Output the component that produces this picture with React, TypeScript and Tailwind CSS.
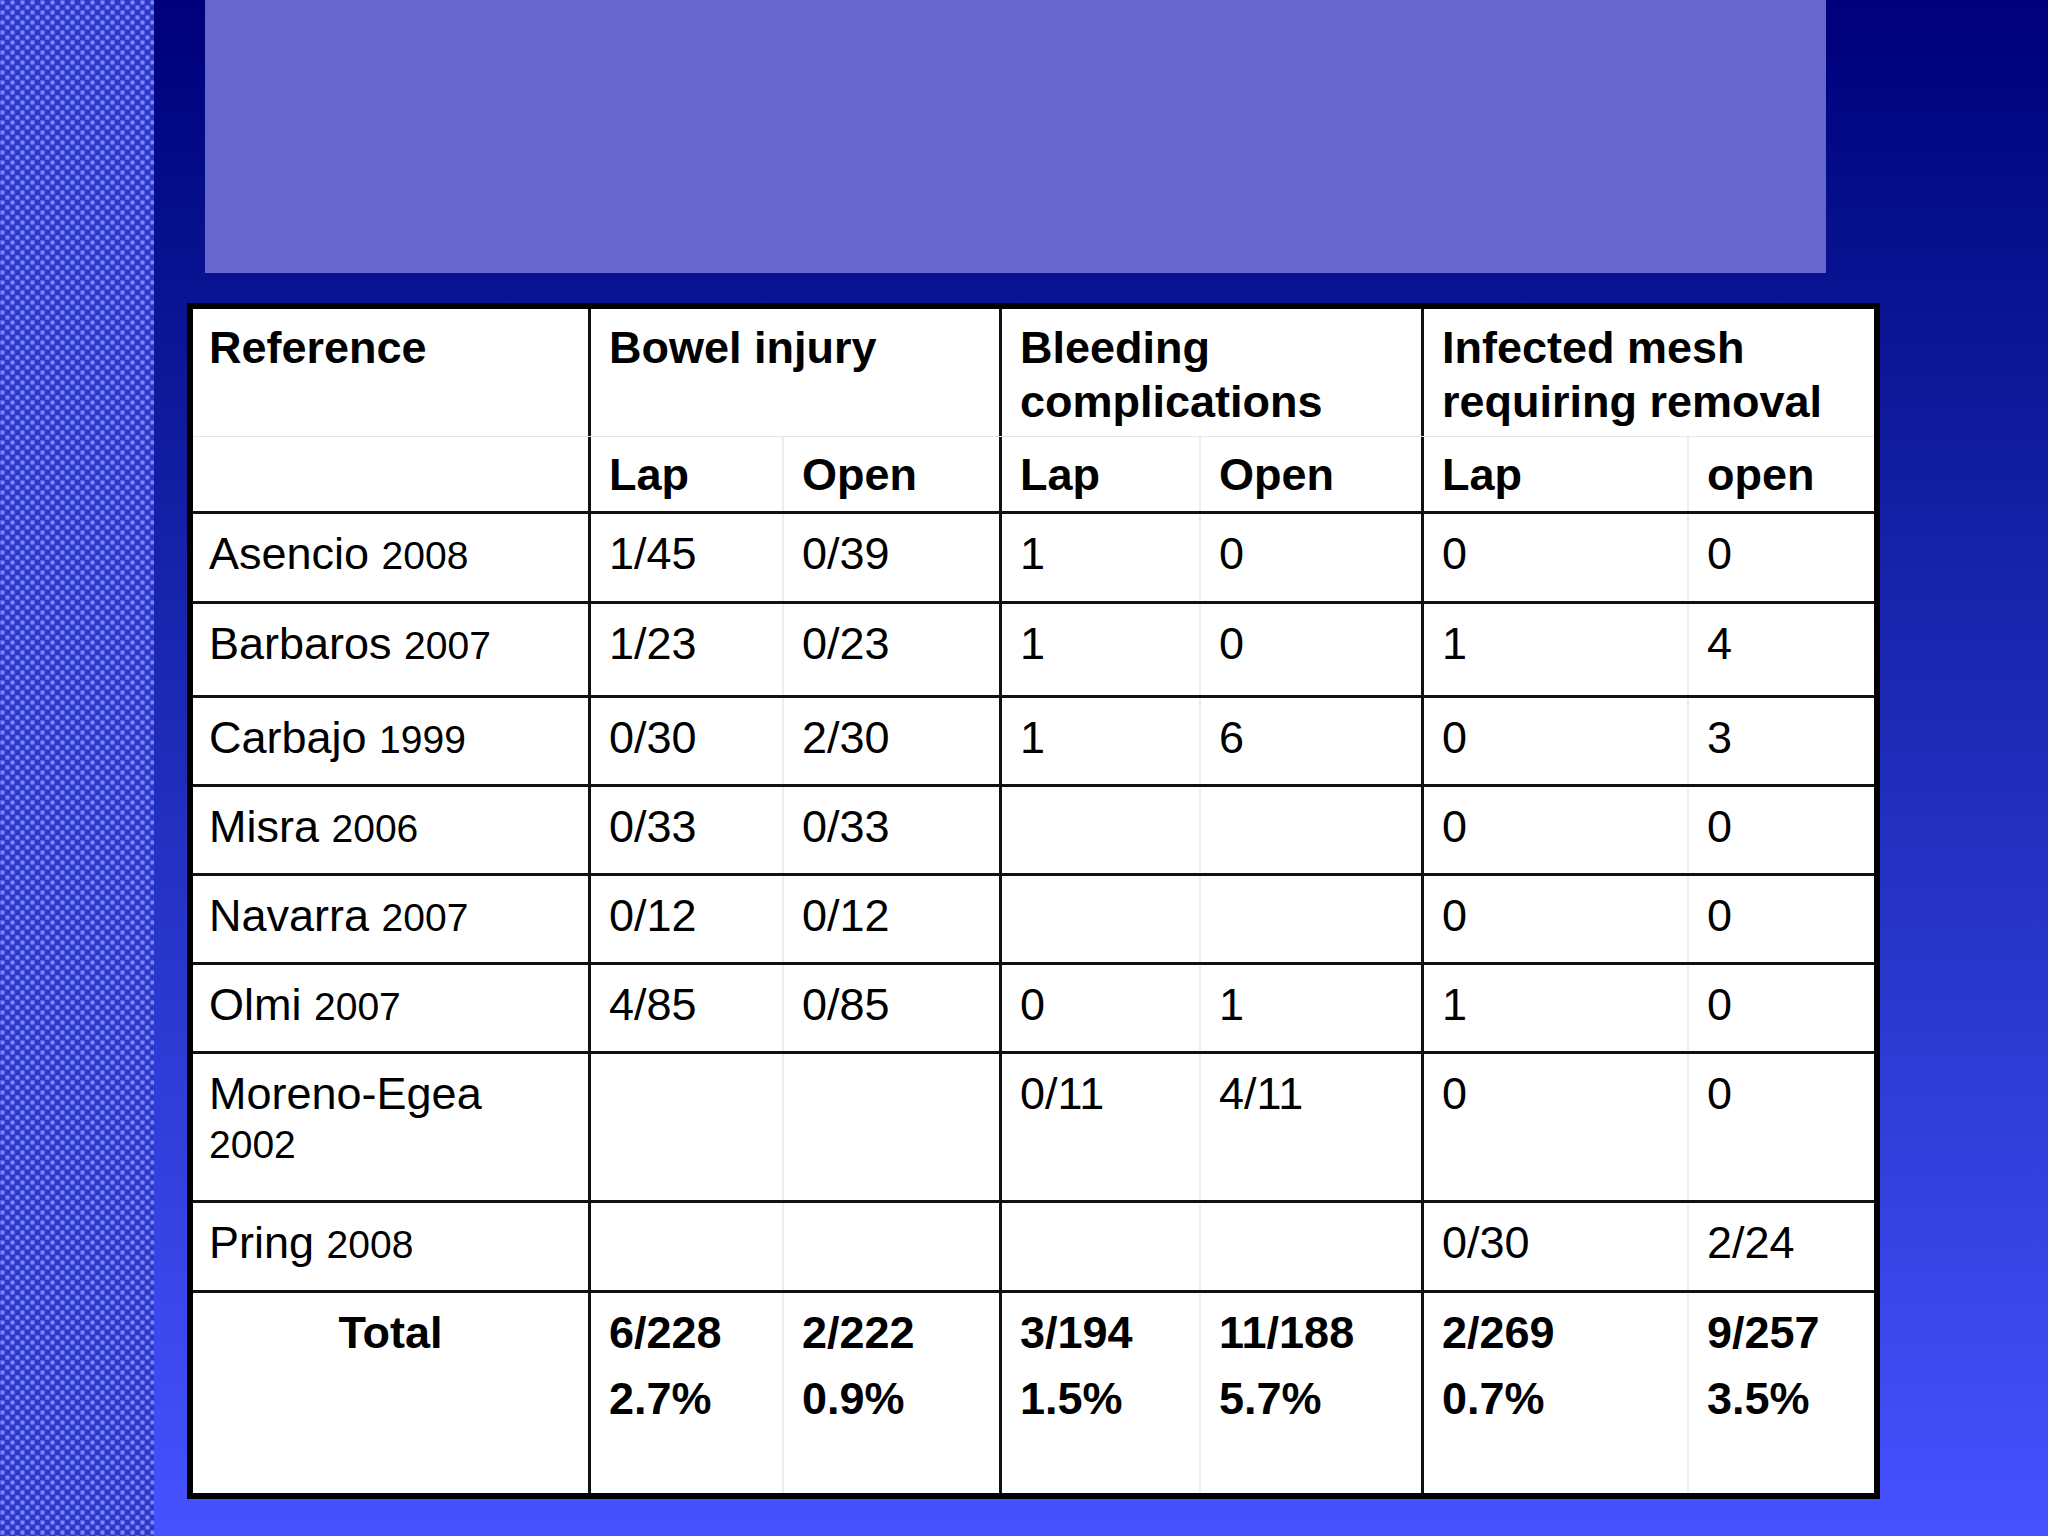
const font = { fontFamily: '"Liberation Sans", Arial, sans-serif' };

type Cell = string | { name: string; year: string; br?: boolean };

const rows: { h: string; cells: Cell[] }[] = [
  { h: "h-[90px]", cells: [{ name: "Asencio", year: "2008" }, "1/45", "0/39", "1", "0", "0", "0"] },
  { h: "h-[94px]", cells: [{ name: "Barbaros", year: "2007" }, "1/23", "0/23", "1", "0", "1", "4"] },
  { h: "h-[89px]", cells: [{ name: "Carbajo", year: "1999" }, "0/30", "2/30", "1", "6", "0", "3"] },
  { h: "h-[89px]", cells: [{ name: "Misra", year: "2006" }, "0/33", "0/33", "", "", "0", "0"] },
  { h: "h-[89px]", cells: [{ name: "Navarra", year: "2007" }, "0/12", "0/12", "", "", "0", "0"] },
  { h: "h-[89px]", cells: [{ name: "Olmi", year: "2007" }, "4/85", "0/85", "0", "1", "1", "0"] },
  { h: "h-[149px]", cells: [{ name: "Moreno-Egea", year: "2002", br: true }, "", "", "0/11", "4/11", "0", "0"] },
  { h: "h-[90px]", cells: [{ name: "Pring", year: "2008" }, "", "", "", "", "0/30", "2/24"] },
];

const totals = [
  ["6/228", "2.7%"],
  ["2/222", "0.9%"],
  ["3/194", "1.5%"],
  ["11/188", "5.7%"],
  ["2/269", "0.7%"],
  ["9/257", "3.5%"],
];

// widths of the 7 columns and the line on their right
const colW = ["w-[398px]", "w-[193px]", "w-[218px]", "w-[199px]", "w-[223px]", "w-[265px]", "w-[185px]"];
const colR = [
  "border-r-[3px] border-r-[#111]",
  "border-r-[2px] border-r-[#ececf2]",
  "border-r-[3px] border-r-[#111]",
  "border-r-[2px] border-r-[#ececf2]",
  "border-r-[3px] border-r-[#111]",
  "border-r-[2px] border-r-[#ececf2]",
  "",
];

function DotStrip() {
  return (
    <div className="w-[154px] h-full shrink-0">
      <svg className="w-full h-full block">
        <defs>
          <pattern id="dots" width="10" height="10" patternUnits="userSpaceOnUse">
            <rect width="10" height="10" fill="#3434c6" />
            <rect x="0.5" y="0.5" width="4" height="4" fill="#6a8eff" />
            <rect x="5.5" y="5.5" width="4" height="4" fill="#6a8eff" />
          </pattern>
        </defs>
        <rect width="100%" height="100%" fill="url(#dots)" />
      </svg>
    </div>
  );
}

function renderCell(c: Cell) {
  if (typeof c === "string") return c;
  return (
    <>
      {c.name}
      {c.br ? <br /> : " "}
      <span className="text-[39px]">{c.year}</span>
    </>
  );
}

export default function App() {
  return (
    <div className="w-[2048px] h-[1536px] flex overflow-hidden bg-linear-to-b from-[#00007a] to-[#4652ff]" style={font}>
      <DotStrip />
      <div className="flex-1 flex flex-col">
        <div className="ml-[51px] w-[1621px] h-[273px] bg-[#6666cc]" />

        <div className="ml-[33px] mt-[30px] w-[1693px] border-[6px] border-black bg-white text-black">
          {/* header row 1 */}
          <div className="flex h-[128px] border-b border-b-[#e4e4ec] text-[45px] font-bold leading-[54px]">
            <div className={`${colW[0]} ${colR[0]} pl-[16px] pt-[12px]`}>Reference</div>
            <div className={`w-[411px] ${colR[2]} pl-[18px] pt-[12px]`}>Bowel injury</div>
            <div className={`w-[422px] ${colR[4]} pl-[18px] pt-[12px]`}>
              Bleeding
              <br />
              complications
            </div>
            <div className="w-[450px] pl-[18px] pt-[12px]">
              Infected mesh
              <br />
              requiring removal
            </div>
          </div>

          {/* header row 2 */}
          <div className="flex h-[77px] border-b-[3px] border-b-[#111] text-[45px] font-bold leading-[54px]">
            {["", "Lap", "Open", "Lap", "Open", "Lap", "open"].map((t, i) => (
              <div key={i} className={`${colW[i]} ${colR[i]} ${i === 0 ? "pl-[16px]" : "pl-[18px]"} pt-[11px]`}>
                {t}
              </div>
            ))}
          </div>

          {rows.map((r, ri) => (
            <div key={ri} className={`flex ${r.h} border-b-[3px] border-b-[#111] text-[45px] leading-[49px]`}>
              {r.cells.map((c, i) => (
                <div key={i} className={`${colW[i]} ${colR[i]} ${i === 0 ? "pl-[16px]" : "pl-[18px]"} pt-[15px]`}>
                  {renderCell(c)}
                </div>
              ))}
            </div>
          ))}

          {/* totals */}
          <div className="flex h-[200px] text-[45px] leading-[49px] font-bold">
            <div className={`${colW[0]} ${colR[0]} pt-[15px] text-center`}>Total</div>
            {totals.map((t, i) => (
              <div key={i} className={`${colW[i + 1]} ${colR[i + 1]} pl-[18px] pt-[15px]`}>
                <div>{t[0]}</div>
                <div className="mt-[17px]">{t[1]}</div>
              </div>
            ))}
          </div>
        </div>
      </div>
    </div>
  );
}
